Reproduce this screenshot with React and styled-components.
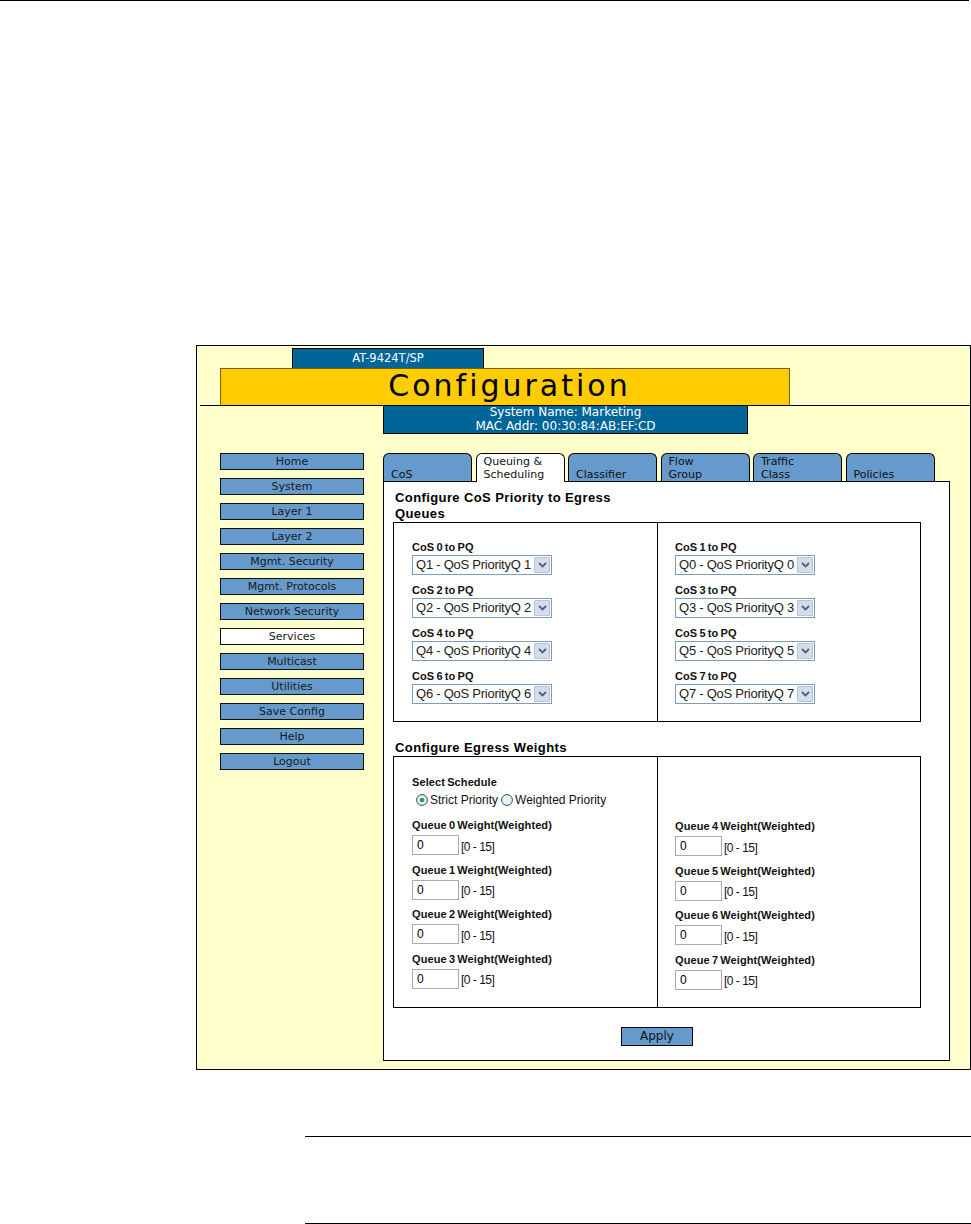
import React from "react";
import styled, { createGlobalStyle } from "styled-components";

const GlobalStyle = createGlobalStyle`
  html, body {
    margin: 0;
    padding: 0;
    background: #ffffff;
  }
  body {
    font-family: "DejaVu Sans", Verdana, sans-serif;
  }
  * {
    box-sizing: border-box;
  }
`;

const navItems = [
  "Home",
  "System",
  "Layer 1",
  "Layer 2",
  "Mgmt. Security",
  "Mgmt. Protocols",
  "Network Security",
  "Services",
  "Multicast",
  "Utilities",
  "Save Config",
  "Help",
  "Logout",
];

const tabs = [
  ["CoS"],
  ["Queuing &", "Scheduling"],
  ["Classifier"],
  ["Flow", "Group"],
  ["Traffic", "Class"],
  ["Policies"],
];

const leftQueues = [
  { cos: 0, q: 1 },
  { cos: 2, q: 2 },
  { cos: 4, q: 4 },
  { cos: 6, q: 6 },
];

const rightQueues = [
  { cos: 1, q: 0 },
  { cos: 3, q: 3 },
  { cos: 5, q: 5 },
  { cos: 7, q: 7 },
];

const Page = styled.div`
  width: 971px;
  height: 1224px;
  overflow: hidden;
`;

const TopRule = styled.div`
  width: 969px;
  height: 1px;
  background: #000;
`;

const Panel = styled.div`
  margin: 344px 0 0 196px;
  width: 775px;
  height: 725px;
  border: 1px solid #000;
  background: #ffffcc;
`;

const ModelTab = styled.div`
  margin: 2px 0 0 95px;
  width: 192px;
  height: 20px;
  border: 1px solid #000;
  border-bottom: none;
  background: #006699;
  color: #fff;
  font: 11.5px/19px "DejaVu Sans", Verdana, sans-serif;
  text-align: center;
`;

const TitleBar = styled.div`
  margin-left: 23px;
  width: 570px;
  height: 37px;
  border: 1px solid #7a6200;
  border-bottom: none;
  padding-left: 9px;
  background: #ffcc00;
  color: #000;
  font: 30px/33px "DejaVu Sans", Verdana, sans-serif;
  letter-spacing: 3px;
  text-align: center;
`;

const HeaderRule = styled.div`
  margin-left: 3px;
  height: 1px;
  background: #000;
`;

const SystemBox = styled.div`
  margin-left: 186px;
  width: 365px;
  height: 28px;
  border: 1px solid #000;
  border-top: none;
  background: #006699;
  color: #fff;
  font: 12px/13.5px "DejaVu Sans", Verdana, sans-serif;
  text-align: center;
`;

const Body = styled.div`
  display: flex;
  gap: 19px;
  margin-top: 19px;
  padding-left: 23px;
`;

const Sidebar = styled.nav`
  display: flex;
  flex-direction: column;
  gap: 8px;
  width: 144px;
  flex: none;
`;

const NavItem = styled.div`
  height: 17px;
  border: 1px solid #111;
  background: ${({ $active }) => ($active ? "#ffffff" : "#6699cc")};
  color: #1a1a1a;
  font: 11px/15px "DejaVu Sans", Verdana, sans-serif;
  text-align: center;
`;

const Main = styled.div`
  display: flex;
  flex-direction: column;
  width: 567px;
  flex: none;
`;

const TabRow = styled.div`
  display: flex;
  align-items: flex-end;
  gap: 3.5px;
  height: 28px;
`;

const Tab = styled.div`
  position: relative;
  z-index: 1;
  display: flex;
  flex-direction: column;
  justify-content: flex-end;
  width: 89px;
  height: ${({ $active }) => ($active ? "29px" : "28px")};
  margin-bottom: ${({ $active }) => ($active ? "-1px" : "0")};
  padding: 0 4px ${({ $active }) => ($active ? "1px" : "0")} 7px;
  border: 1px solid #000;
  border-bottom: none;
  border-radius: 6px 6px 0 0;
  background: ${({ $active }) => ($active ? "#ffffff" : "#6699cc")};
  color: #111;
  font: 11px/13px "DejaVu Sans", Verdana, sans-serif;
`;

const ContentBox = styled.div`
  height: 580px;
  padding: 8px 0 0 9px;
  border: 1px solid #000;
  background: #fff;
`;

const SectionTitle = styled.h2`
  max-width: 240px;
  margin: ${({ $top }) => $top || 0}px 0 0 2px;
  color: #000;
  font: bold 13px/16px "Liberation Sans", Arial, sans-serif;
  letter-spacing: 0.4px;
`;

const FieldGrid = styled.div`
  display: grid;
  grid-template-columns: 263px 1fr;
  width: 528px;
  border: 1px solid #000;
`;

const FieldColumn = styled.div`
  display: flex;
  flex-direction: column;
  padding: ${({ $top }) => $top}px 0 ${({ $bottom }) => $bottom}px
    ${({ $divider }) => ($divider ? 17 : 18)}px;
  border-left: ${({ $divider }) => ($divider ? "1px solid #000" : "none")};
`;

const Field = styled.div`
  display: flex;
  flex-direction: column;
  align-items: flex-start;
  margin-top: ${({ $top }) => $top || 0}px;
`;

const FieldLabel = styled.div`
  color: #111;
  font: bold 11px/13px "Liberation Sans", Arial, sans-serif;
  letter-spacing: 0.1px;
  word-spacing: -1px;
  white-space: nowrap;
`;

const SelectBox = styled.div`
  display: flex;
  align-items: stretch;
  width: 140px;
  height: 20px;
  margin-top: 1px;
  padding: 1px;
  border: 1px solid #7f9db9;
  background: #fff;
`;

const SelectText = styled.span`
  flex: 1;
  padding-left: 2px;
  overflow: hidden;
  color: #222;
  font: 13px/16px "Liberation Sans", Arial, sans-serif;
  letter-spacing: -0.25px;
  white-space: nowrap;
`;

const SelectArrow = styled.span`
  display: flex;
  align-items: center;
  justify-content: center;
  width: 16px;
  flex: none;
  border: 1px solid #b7c3db;
  border-radius: 1px;
  background: #d5dcea;
`;

const RadioRow = styled.div`
  display: flex;
  align-items: center;
  height: 14px;
  margin: 4px 0 0 4px;
  color: #111;
  font: 12px/14px "Liberation Sans", Arial, sans-serif;
  white-space: nowrap;
`;

const RadioOption = styled.label`
  display: flex;
  align-items: center;
  gap: 2px;
  margin-right: 3px;
`;

const InputRow = styled.div`
  display: flex;
  align-items: center;
  margin-top: 3px;
`;

const WeightInput = styled.input`
  width: 47px;
  height: 20px;
  margin: 0;
  padding: 0 0 0 4px;
  border: 1px solid #a5acb2;
  background: #fff;
  color: #000;
  font: 12px/18px "Liberation Sans", Arial, sans-serif;
  outline: none;
`;

const RangeHint = styled.span`
  margin: 3px 0 0 2px;
  color: #111;
  font: 12px/16px "Liberation Sans", Arial, sans-serif;
  letter-spacing: -0.5px;
`;

const ActionRow = styled.div`
  display: flex;
  justify-content: center;
  width: 528px;
  margin-top: 19px;
`;

const ApplyButton = styled.button`
  width: 72px;
  height: 19px;
  padding: 0;
  border: 1px solid #000;
  border-radius: 0;
  background: #6699cc;
  color: #111;
  font: 12px/17px "DejaVu Sans", Verdana, sans-serif;
`;

const NoteRule = styled.div`
  height: 1px;
  margin: ${({ $top }) => $top}px 0 0 305px;
  background: #000;
`;

const Chevron = () => (
  <svg width="9" height="6" viewBox="0 0 9 6">
    <path d="M1 1 L4.5 4.5 L8 1" fill="none" stroke="#4d6185" strokeWidth="1.8" />
  </svg>
);

const Radio = ({ checked }) => (
  <svg width="12" height="12" viewBox="0 0 12 12">
    <circle cx="6" cy="6" r="5.4" fill="#f1f1ec" stroke="#1c5180" strokeWidth="1" />
    {checked && <circle cx="6" cy="6" r="2.3" fill="#2aa72a" />}
  </svg>
);

const QueueSelect = ({ cos, q, top }) => (
  <Field $top={top}>
    <FieldLabel>CoS {cos} to PQ</FieldLabel>
    <SelectBox>
      <SelectText>
        Q{q} - QoS PriorityQ {q}
      </SelectText>
      <SelectArrow>
        <Chevron />
      </SelectArrow>
    </SelectBox>
  </Field>
);

const WeightField = ({ n, top }) => (
  <Field $top={top}>
    <FieldLabel>Queue {n} Weight(Weighted)</FieldLabel>
    <InputRow>
      <WeightInput readOnly value="0" />
      <RangeHint>[0 - 15]</RangeHint>
    </InputRow>
  </Field>
);

const App = () => {
  return (
    <Page>
      <GlobalStyle />
      <TopRule />
      <Panel>
        <ModelTab>AT-9424T/SP</ModelTab>
        <TitleBar>Configuration</TitleBar>
        <HeaderRule />
        <SystemBox>
          System Name: Marketing
          <br />
          MAC Addr: 00:30:84:AB:EF:CD
        </SystemBox>
        <Body>
          <Sidebar>
            {navItems.map((item) => (
              <NavItem key={item} $active={item === "Services"}>
                {item}
              </NavItem>
            ))}
          </Sidebar>
          <Main>
            <TabRow>
              {tabs.map((lines, i) => (
                <Tab key={lines[0]} $active={i === 1}>
                  {lines.map((l) => (
                    <span key={l}>{l}</span>
                  ))}
                </Tab>
              ))}
            </TabRow>
            <ContentBox>
              <SectionTitle>Configure CoS Priority to Egress Queues</SectionTitle>
              <FieldGrid>
                <FieldColumn $top={18} $bottom={17}>
                  {leftQueues.map((row, i) => (
                    <QueueSelect key={row.cos} cos={row.cos} q={row.q} top={i ? 9 : 0} />
                  ))}
                </FieldColumn>
                <FieldColumn $divider $top={18} $bottom={17}>
                  {rightQueues.map((row, i) => (
                    <QueueSelect key={row.cos} cos={row.cos} q={row.q} top={i ? 9 : 0} />
                  ))}
                </FieldColumn>
              </FieldGrid>

              <SectionTitle $top={18}>Configure Egress Weights</SectionTitle>
              <FieldGrid>
                <FieldColumn $top={19} $bottom={17}>
                  <FieldLabel>Select Schedule</FieldLabel>
                  <RadioRow>
                    <RadioOption>
                      <Radio checked />
                      Strict Priority
                    </RadioOption>
                    <RadioOption>
                      <Radio />
                      Weighted Priority
                    </RadioOption>
                  </RadioRow>
                  {[0, 1, 2, 3].map((n, i) => (
                    <WeightField key={n} n={n} top={i ? 8.5 : 12} />
                  ))}
                </FieldColumn>
                <FieldColumn $divider $top={63} $bottom={17}>
                  {[4, 5, 6, 7].map((n, i) => (
                    <WeightField key={n} n={n} top={i ? 8.5 : 0} />
                  ))}
                </FieldColumn>
              </FieldGrid>

              <ActionRow>
                <ApplyButton>Apply</ApplyButton>
              </ActionRow>
            </ContentBox>
          </Main>
        </Body>
      </Panel>
      <NoteRule $top={66} />
      <NoteRule $top={86} />
    </Page>
  );
};

export default App;
